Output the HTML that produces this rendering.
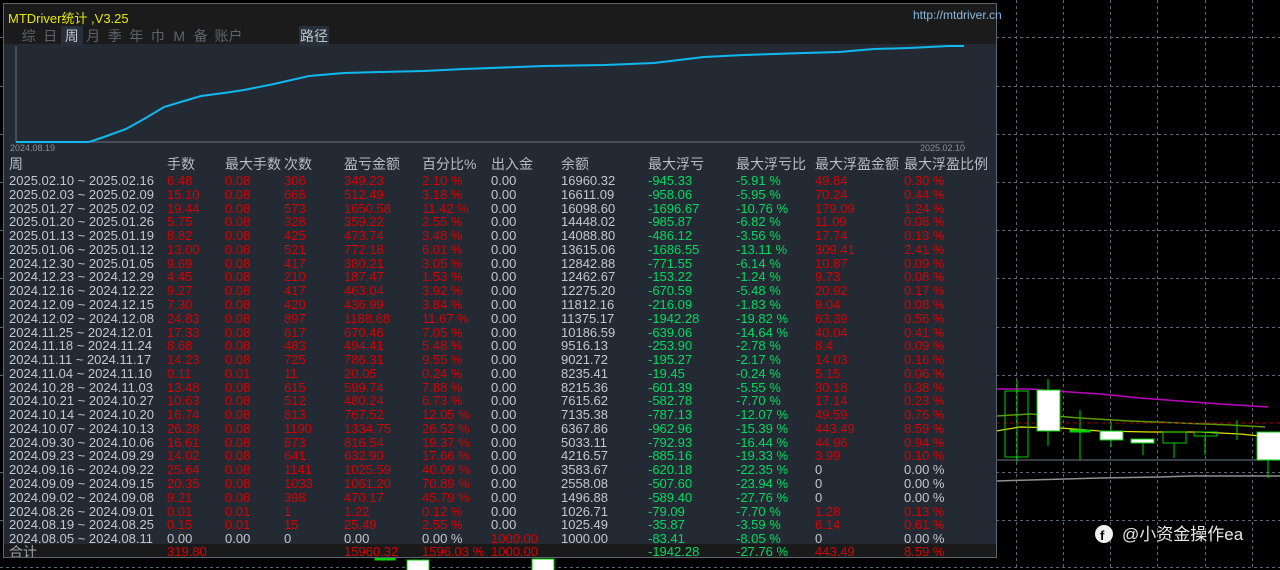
<!DOCTYPE html>
<html><head><meta charset="utf-8"><style>
*{margin:0;padding:0;box-sizing:border-box}
body{width:1280px;height:570px;background:#000;position:relative;overflow:hidden;font-family:"Liberation Sans","Noto Sans CJK SC",sans-serif}
#bg{position:absolute;left:0;top:0}
#panel{position:absolute;left:3px;top:3px;width:994px;height:555px;background:#232a33;border:1px solid #5c6470;overflow:hidden}
#hdr{position:absolute;left:0;top:0;width:100%;height:40px;background:#1b1b1b}
.title{position:absolute;left:4px;top:4px;color:#e8e800;font-size:13px}
.url{position:absolute;left:913px;top:8px;color:#8ab8e0;font-size:12px}
.tabs{position:absolute;left:14px;top:22px;color:#5e646c;font-size:14px;white-space:nowrap}
.tabs span{display:inline-block;width:21.5px;text-align:center}
.tabs .on{color:#c0c6ce;background:#27303a}
.lj{position:absolute;left:295px;top:22px;color:#c0c6ce;background:#27303a;font-size:14px;padding:0 1px}
.dl{position:absolute;font-size:9px;color:#8a9098}
.r{position:absolute;left:0;height:14px;width:100%;font-size:13px;line-height:14px;white-space:nowrap}
.r span{position:absolute;color:#d80000}
.r span:nth-child(1){left:5px;color:#c4c8ce}
.r span:nth-child(2){left:163px}
.r span:nth-child(3){left:221px}
.r span:nth-child(4){left:280px}
.r span:nth-child(5){left:340px}
.r span:nth-child(6){left:418px}
.r span:nth-child(7){left:487px;color:#c4c8ce}
.r span:nth-child(8){left:557px;color:#c4c8ce}
.r span:nth-child(9){left:644px;color:#00d860}
.r span:nth-child(10){left:732px;color:#00d860}
.r span:nth-child(11){left:811px}
.r span:nth-child(12){left:900px}
.r span.g{color:#c4c8ce}
.r span.rd{color:#d80000}
.h{font-size:14px}
.h span{color:#b8bcc4 !important}
#tot{position:absolute;left:0;top:540px;width:100%;height:15px;background:#1a1a1a}
</style></head><body>
<svg id="bg" width="1280" height="570">
<g stroke="#5a6878" stroke-dasharray="3,3" stroke-width="1">
<line x1="1016.5" y1="0" x2="1016.5" y2="570"/><line x1="1063.5" y1="0" x2="1063.5" y2="570"/><line x1="1110.5" y1="0" x2="1110.5" y2="570"/><line x1="1157.5" y1="0" x2="1157.5" y2="570"/><line x1="1205.5" y1="0" x2="1205.5" y2="570"/><line x1="1252.5" y1="0" x2="1252.5" y2="570"/>
<line x1="0" y1="37.5" x2="1280" y2="37.5"/><line x1="0" y1="86.5" x2="1280" y2="86.5"/><line x1="0" y1="134.5" x2="1280" y2="134.5"/><line x1="0" y1="182.5" x2="1280" y2="182.5"/><line x1="0" y1="230.5" x2="1280" y2="230.5"/><line x1="0" y1="278.5" x2="1280" y2="278.5"/><line x1="0" y1="327.5" x2="1280" y2="327.5"/><line x1="0" y1="375.5" x2="1280" y2="375.5"/><line x1="0" y1="472.5" x2="1280" y2="472.5"/><line x1="0" y1="520.5" x2="1280" y2="520.5"/><line x1="0" y1="567.5" x2="1280" y2="567.5"/>
</g>
<line x1="996" y1="460" x2="1280" y2="460" stroke="#4a525c" stroke-width="1.5"/>
<polyline points="996,389 1030,389 1070,392 1100,394 1140,398 1180,401 1220,404 1268,407" fill="none" stroke="#c000c0" stroke-width="1.5"/>
<polyline points="996,416 1030,414 1080,418 1130,421 1180,423 1230,425 1265,427" fill="none" stroke="#5a9a00" stroke-width="1.5"/>
<polyline points="996,431 1020,427 1060,428 1100,431 1150,432 1200,432 1240,434 1270,437" fill="none" stroke="#e0e000" stroke-width="1.2"/>
<line x1="996" y1="423" x2="1280" y2="423" stroke="#a00000" stroke-dasharray="4,3"/>
<polyline points="996,481 1030,480 1100,478 1160,477 1190,476 1280,476" fill="none" stroke="#909090" stroke-width="1.5"/>
<g stroke="#00d000" stroke-width="1"><line x1="1017" y1="380" x2="1017" y2="462"/><rect x="1005" y="391" width="23" height="66" fill="none"/>
<line x1="1048" y1="379" x2="1048" y2="446"/><rect x="1037" y="390" width="23" height="41" fill="#fff"/>
<line x1="1080" y1="410" x2="1080" y2="460"/><rect x="1070" y="430" width="20" height="2" fill="#00d000"/>
<line x1="1111" y1="422" x2="1111" y2="447"/><rect x="1100" y="431" width="23" height="9" fill="#fff"/>
<rect x="1131" y="439" width="23" height="4" fill="#fff"/><line x1="1143" y1="443" x2="1143" y2="455"/>
<rect x="1163" y="432" width="23" height="11" fill="none"/><line x1="1174" y1="443" x2="1174" y2="458"/>
<rect x="1194" y="432" width="23" height="4" fill="none"/><line x1="1205" y1="436" x2="1205" y2="455"/>
<line x1="1237" y1="420" x2="1237" y2="440"/>
<rect x="1257" y="432" width="25" height="28" fill="#fff"/><line x1="1268" y1="460" x2="1268" y2="478"/>
<rect x="407" y="560" width="22" height="12" fill="#fff"/><rect x="532" y="559" width="22" height="12" fill="#fff"/><rect x="375" y="558" width="20" height="2" fill="#00d000"/></g>
<circle cx="1104" cy="534" r="9" fill="#f0f0f0"/><text x="1100" y="540" font-size="13" font-weight="bold" fill="#000" font-family="Liberation Sans">f</text>
<text x="1122" y="540" font-size="17" fill="#e8e8e8" font-family="Liberation Sans,Noto Sans CJK SC,sans-serif">@小资金操作ea</text>
</svg>
<div id="panel">
<div id="hdr">
<div class="title">MTDriver统计 ,V3.25</div>
<div class="tabs"><span>综</span><span>日</span><span class="on">周</span><span>月</span><span>季</span><span>年</span><span>巾</span><span>M</span><span>备</span><span style="width:34px">账户</span></div>
<div class="lj">路径</div>
</div>
<svg style="position:absolute;left:0;top:40px" width="994" height="110">
<polyline points="12,2 12,98 960,98" fill="none" stroke="#6a7078" stroke-width="1"/>
<polyline points="12,98 85,98 100,93 122,85 140,75 160,63 180,57 197,52 220,49 240,46 270,40 305,32 340,29 375,28 420,27 460,25 540,22 600,21 650,19 700,13 740,11 800,9 835,8 870,5 905,4 945,2 960,2" fill="none" stroke="#10b8f0" stroke-width="2"/>
</svg>
<div class="dl" style="left:6px;top:139px">2024.08.19</div>
<div class="dl" style="left:916px;top:139px">2025.02.10</div>
<div class="r h" style="top:153px"><span>周</span><span>手数</span><span>最大手数</span><span>次数</span><span>盈亏金额</span><span>百分比%</span><span>出入金</span><span>余额</span><span>最大浮亏</span><span>最大浮亏比</span><span>最大浮盈金额</span><span>最大浮盈比例</span></div>
<div class="r" style="top:170px"><span>2025.02.10 ~ 2025.02.16</span><span>6.48</span><span>0.08</span><span>306</span><span>349.23</span><span>2.10 %</span><span>0.00</span><span>16960.32</span><span>-945.33</span><span>-5.91 %</span><span>49.84</span><span>0.30 %</span></div>
<div class="r" style="top:183.8px"><span>2025.02.03 ~ 2025.02.09</span><span>15.10</span><span>0.08</span><span>668</span><span>512.49</span><span>3.18 %</span><span>0.00</span><span>16611.09</span><span>-958.06</span><span>-5.95 %</span><span>70.24</span><span>0.44 %</span></div>
<div class="r" style="top:197.5px"><span>2025.01.27 ~ 2025.02.02</span><span>19.44</span><span>0.08</span><span>573</span><span>1650.58</span><span>11.42 %</span><span>0.00</span><span>16098.60</span><span>-1696.67</span><span>-10.76 %</span><span>179.09</span><span>1.24 %</span></div>
<div class="r" style="top:211.3px"><span>2025.01.20 ~ 2025.01.26</span><span>5.75</span><span>0.08</span><span>328</span><span>359.22</span><span>2.55 %</span><span>0.00</span><span>14448.02</span><span>-985.87</span><span>-6.82 %</span><span>11.09</span><span>0.08 %</span></div>
<div class="r" style="top:225.1px"><span>2025.01.13 ~ 2025.01.19</span><span>8.82</span><span>0.08</span><span>425</span><span>473.74</span><span>3.48 %</span><span>0.00</span><span>14088.80</span><span>-486.12</span><span>-3.56 %</span><span>17.74</span><span>0.13 %</span></div>
<div class="r" style="top:238.9px"><span>2025.01.06 ~ 2025.01.12</span><span>13.00</span><span>0.08</span><span>521</span><span>772.18</span><span>6.01 %</span><span>0.00</span><span>13615.06</span><span>-1686.55</span><span>-13.11 %</span><span>309.41</span><span>2.41 %</span></div>
<div class="r" style="top:252.6px"><span>2024.12.30 ~ 2025.01.05</span><span>9.69</span><span>0.08</span><span>417</span><span>380.21</span><span>3.05 %</span><span>0.00</span><span>12842.88</span><span>-771.55</span><span>-6.14 %</span><span>10.87</span><span>0.09 %</span></div>
<div class="r" style="top:266.4px"><span>2024.12.23 ~ 2024.12.29</span><span>4.45</span><span>0.08</span><span>210</span><span>187.47</span><span>1.53 %</span><span>0.00</span><span>12462.67</span><span>-153.22</span><span>-1.24 %</span><span>9.73</span><span>0.08 %</span></div>
<div class="r" style="top:280.2px"><span>2024.12.16 ~ 2024.12.22</span><span>9.27</span><span>0.08</span><span>417</span><span>463.04</span><span>3.92 %</span><span>0.00</span><span>12275.20</span><span>-670.59</span><span>-5.48 %</span><span>20.92</span><span>0.17 %</span></div>
<div class="r" style="top:293.9px"><span>2024.12.09 ~ 2024.12.15</span><span>7.30</span><span>0.08</span><span>420</span><span>436.99</span><span>3.84 %</span><span>0.00</span><span>11812.16</span><span>-216.09</span><span>-1.83 %</span><span>9.04</span><span>0.08 %</span></div>
<div class="r" style="top:307.7px"><span>2024.12.02 ~ 2024.12.08</span><span>24.83</span><span>0.08</span><span>897</span><span>1188.68</span><span>11.67 %</span><span>0.00</span><span>11375.17</span><span>-1942.28</span><span>-19.82 %</span><span>63.39</span><span>0.56 %</span></div>
<div class="r" style="top:321.5px"><span>2024.11.25 ~ 2024.12.01</span><span>17.33</span><span>0.08</span><span>617</span><span>670.46</span><span>7.05 %</span><span>0.00</span><span>10186.59</span><span>-639.06</span><span>-14.64 %</span><span>40.04</span><span>0.41 %</span></div>
<div class="r" style="top:335.2px"><span>2024.11.18 ~ 2024.11.24</span><span>8.68</span><span>0.08</span><span>483</span><span>494.41</span><span>5.48 %</span><span>0.00</span><span>9516.13</span><span>-253.90</span><span>-2.78 %</span><span>8.4</span><span>0.09 %</span></div>
<div class="r" style="top:349px"><span>2024.11.11 ~ 2024.11.17</span><span>14.23</span><span>0.08</span><span>725</span><span>786.31</span><span>9.55 %</span><span>0.00</span><span>9021.72</span><span>-195.27</span><span>-2.17 %</span><span>14.03</span><span>0.16 %</span></div>
<div class="r" style="top:362.8px"><span>2024.11.04 ~ 2024.11.10</span><span>0.11</span><span>0.01</span><span>11</span><span>20.05</span><span>0.24 %</span><span>0.00</span><span>8235.41</span><span>-19.45</span><span>-0.24 %</span><span>5.15</span><span>0.06 %</span></div>
<div class="r" style="top:376.6px"><span>2024.10.28 ~ 2024.11.03</span><span>13.48</span><span>0.08</span><span>615</span><span>599.74</span><span>7.88 %</span><span>0.00</span><span>8215.36</span><span>-601.39</span><span>-5.55 %</span><span>30.18</span><span>0.38 %</span></div>
<div class="r" style="top:390.3px"><span>2024.10.21 ~ 2024.10.27</span><span>10.63</span><span>0.08</span><span>512</span><span>480.24</span><span>6.73 %</span><span>0.00</span><span>7615.62</span><span>-582.78</span><span>-7.70 %</span><span>17.14</span><span>0.23 %</span></div>
<div class="r" style="top:404.1px"><span>2024.10.14 ~ 2024.10.20</span><span>16.74</span><span>0.08</span><span>813</span><span>767.52</span><span>12.05 %</span><span>0.00</span><span>7135.38</span><span>-787.13</span><span>-12.07 %</span><span>49.59</span><span>0.76 %</span></div>
<div class="r" style="top:417.9px"><span>2024.10.07 ~ 2024.10.13</span><span>26.28</span><span>0.08</span><span>1190</span><span>1334.75</span><span>26.52 %</span><span>0.00</span><span>6367.86</span><span>-962.96</span><span>-15.39 %</span><span>443.49</span><span>8.59 %</span></div>
<div class="r" style="top:431.6px"><span>2024.09.30 ~ 2024.10.06</span><span>16.61</span><span>0.08</span><span>873</span><span>816.54</span><span>19.37 %</span><span>0.00</span><span>5033.11</span><span>-792.93</span><span>-16.44 %</span><span>44.96</span><span>0.94 %</span></div>
<div class="r" style="top:445.4px"><span>2024.09.23 ~ 2024.09.29</span><span>14.02</span><span>0.08</span><span>641</span><span>632.90</span><span>17.66 %</span><span>0.00</span><span>4216.57</span><span>-885.16</span><span>-19.33 %</span><span>3.99</span><span>0.10 %</span></div>
<div class="r" style="top:459.2px"><span>2024.09.16 ~ 2024.09.22</span><span>25.64</span><span>0.08</span><span>1141</span><span>1025.59</span><span>40.09 %</span><span>0.00</span><span>3583.67</span><span>-620.18</span><span>-22.35 %</span><span class="g">0</span><span class="g">0.00 %</span></div>
<div class="r" style="top:473px"><span>2024.09.09 ~ 2024.09.15</span><span>20.35</span><span>0.08</span><span>1033</span><span>1061.20</span><span>70.89 %</span><span>0.00</span><span>2558.08</span><span>-507.60</span><span>-23.94 %</span><span class="g">0</span><span class="g">0.00 %</span></div>
<div class="r" style="top:486.7px"><span>2024.09.02 ~ 2024.09.08</span><span>9.21</span><span>0.08</span><span>398</span><span>470.17</span><span>45.79 %</span><span>0.00</span><span>1496.88</span><span>-589.40</span><span>-27.76 %</span><span class="g">0</span><span class="g">0.00 %</span></div>
<div class="r" style="top:500.5px"><span>2024.08.26 ~ 2024.09.01</span><span>0.01</span><span>0.01</span><span>1</span><span>1.22</span><span>0.12 %</span><span>0.00</span><span>1026.71</span><span>-79.09</span><span>-7.70 %</span><span>1.28</span><span>0.13 %</span></div>
<div class="r" style="top:514.3px"><span>2024.08.19 ~ 2024.08.25</span><span>0.15</span><span>0.01</span><span>15</span><span>25.49</span><span>2.55 %</span><span>0.00</span><span>1025.49</span><span>-35.87</span><span>-3.59 %</span><span>6.14</span><span>0.61 %</span></div>
<div class="r" style="top:528px"><span>2024.08.05 ~ 2024.08.11</span><span class="g">0.00</span><span class="g">0.00</span><span class="g">0</span><span class="g">0.00</span><span class="g">0.00 %</span><span class="rd">1000.00</span><span>1000.00</span><span>-83.41</span><span>-8.05 %</span><span class="g">0</span><span class="g">0.00 %</span></div>
<div id="tot"></div>
<div class="r" style="top:541px"><span style="font-size:14px;color:#9aa0a8">合计</span><span>319.80</span><span></span><span></span><span>15960.32</span><span>1596.03 %</span><span class="rd">1000.00</span><span></span><span>-1942.28</span><span>-27.76 %</span><span>443.49</span><span>8.59 %</span></div>
</div>
<div class="url">http://mtdriver.cn</div>
</body></html>
